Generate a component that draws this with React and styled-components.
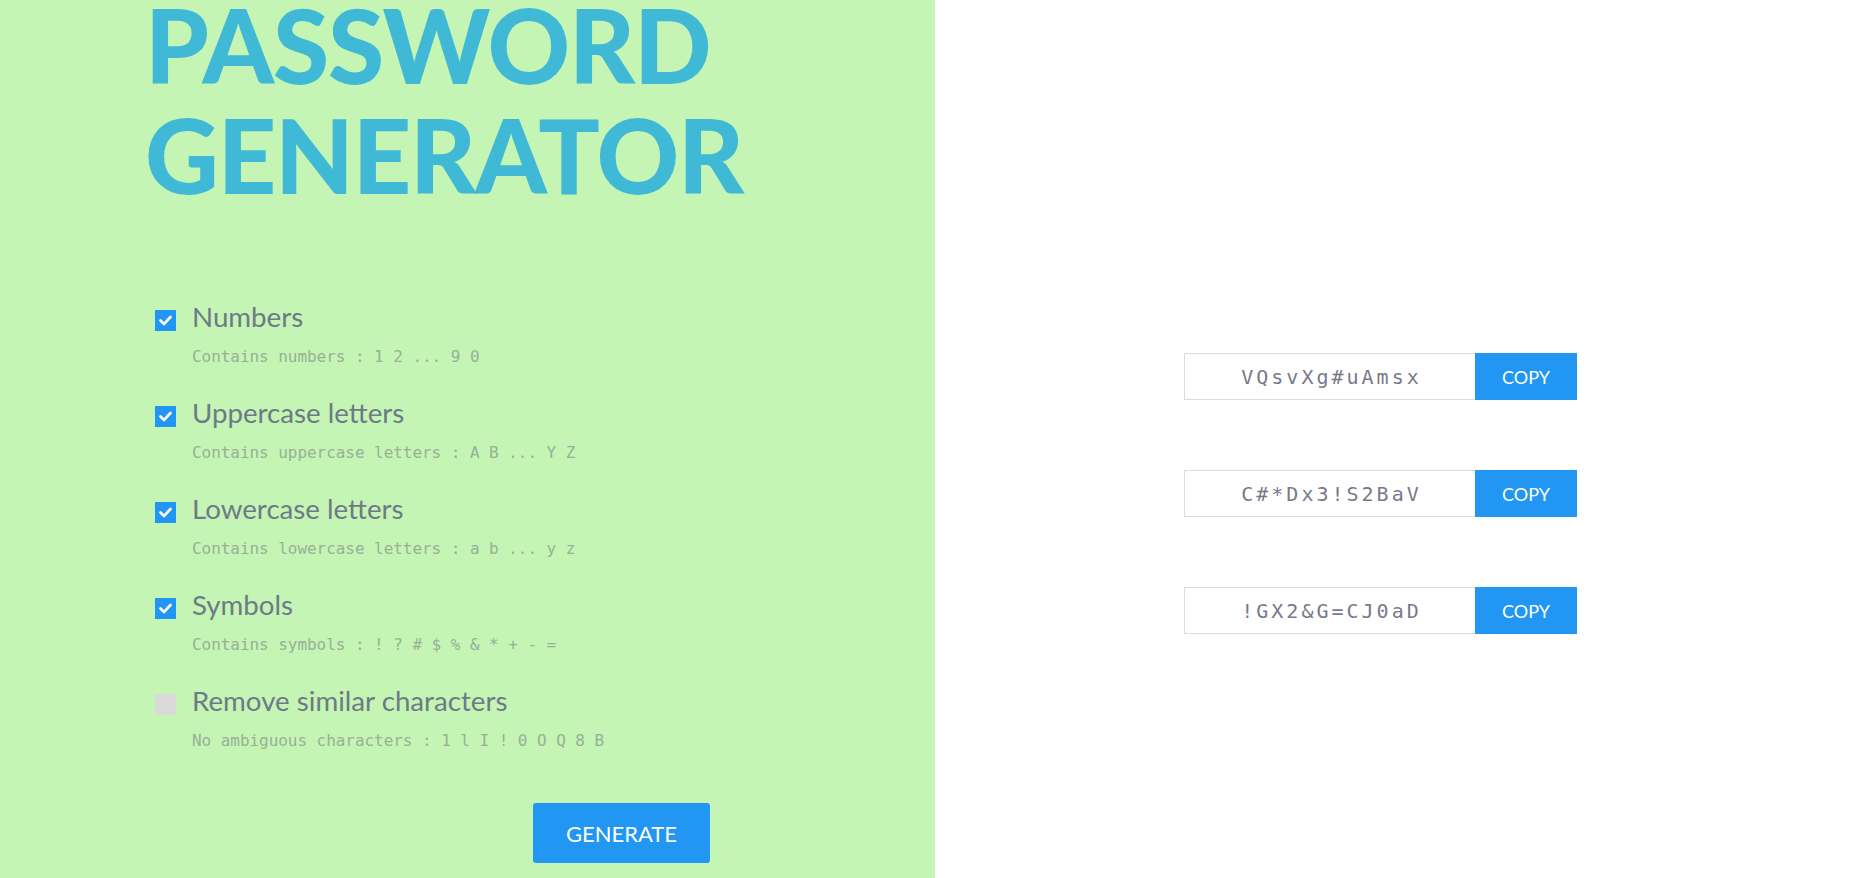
import React from "react";
import styled, { createGlobalStyle } from "styled-components";

const GlobalStyle = createGlobalStyle`
  html, body {
    margin: 0;
    padding: 0;
    height: 100%;
    overflow: hidden;
    background: #fff;
  }
  #root {
    height: 100%;
  }
`;

const Page = styled.div`
  display: grid;
  grid-template-columns: 935px 1fr;
  height: 878px;
  font-family: Lato, "Noto Sans", sans-serif;
`;

const LeftPanel = styled.div`
  background: #c4f5b4;
  padding-left: 145px;
  overflow: hidden;
`;

const Title = styled.h1`
  margin: -10px 0 0 0;
  font-size: 102px;
  line-height: 110px;
  font-weight: 900;
  color: #3fb9d6;
  letter-spacing: -1.2px;
`;

const Options = styled.div`
  display: flex;
  flex-direction: column;
  gap: 27px;
  margin: 90px 0 0 10px;
`;

const Option = styled.div`
  display: flex;
  flex-direction: column;
`;

const OptionHead = styled.label`
  display: flex;
  align-items: center;
  gap: 16px;
  height: 34px;
`;

const Check = styled.span`
  display: flex;
  align-items: center;
  justify-content: center;
  width: 21px;
  height: 21px;
  margin-top: 6px;
  background: ${(p) => (p.checked ? "#2196f3" : "#dadada")};
  flex-shrink: 0;
`;

const Label = styled.span`
  font-size: 27.7px;
  line-height: 34px;
  color: #6e7a87;
`;

const Description = styled.p`
  margin: 11px 0 0 37px;
  font-family: "DejaVu Sans Mono", "Liberation Mono", monospace;
  font-size: 16px;
  line-height: 24px;
  color: #98b097;
  letter-spacing: -0.05px;
`;

const GenerateButton = styled.button`
  display: block;
  margin: 50px 0 0 388px;
  width: 177px;
  height: 60px;
  border: none;
  border-radius: 3px;
  background: #2196f3;
  color: #fff;
  font-family: Lato, "Noto Sans", sans-serif;
  font-size: 22px;
  cursor: pointer;
`;

const RightPanel = styled.div`
  display: flex;
  flex-direction: column;
  gap: 70px;
  padding: 353px 0 0 249px;
`;

const ResultRow = styled.div`
  display: flex;
  height: 47px;
`;

const ResultField = styled.div`
  width: 291px;
  box-sizing: border-box;
  border: 1px solid #dcdcdc;
  border-right: none;
  display: flex;
  align-items: center;
  justify-content: center;
  font-family: "DejaVu Sans Mono", "Liberation Mono", monospace;
  font-size: 20px;
  letter-spacing: 3px;
  color: #777a8a;
  padding-left: 3px;
`;

const CopyButton = styled.button`
  width: 102px;
  border: none;
  background: #2196f3;
  color: #fff;
  font-family: Lato, "Noto Sans", sans-serif;
  font-size: 18px;
  cursor: pointer;
`;

const CheckMark = () => (
  <svg width="13" height="11" viewBox="0 0 13 11">
    <polyline
      points="1.5,5.5 5,9 11.5,2"
      fill="none"
      stroke="#fff"
      strokeWidth="2.6"
      strokeLinecap="round"
      strokeLinejoin="round"
    />
  </svg>
);

const options = [
  { label: "Numbers", desc: "Contains numbers : 1 2 ... 9 0", checked: true },
  { label: "Uppercase letters", desc: "Contains uppercase letters : A B ... Y Z", checked: true },
  { label: "Lowercase letters", desc: "Contains lowercase letters : a b ... y z", checked: true },
  { label: "Symbols", desc: "Contains symbols : ! ? # $ % & * + - =", checked: true },
  { label: "Remove similar characters", desc: "No ambiguous characters : 1 l I ! 0 O Q 8 B", checked: false },
];

const passwords = ["VQsvXg#uAmsx", "C#*Dx3!S2BaV", "!GX2&G=CJ0aD"];

const App = () => {
  return (
    <>
      <GlobalStyle />
      <Page>
        <LeftPanel>
          <Title>
            PASSWORD
            <br />
            GENERATOR
          </Title>
          <Options>
            {options.map((o) => (
              <Option key={o.label}>
                <OptionHead>
                  <Check checked={o.checked}>{o.checked && <CheckMark />}</Check>
                  <Label>{o.label}</Label>
                </OptionHead>
                <Description>{o.desc}</Description>
              </Option>
            ))}
          </Options>
          <GenerateButton>GENERATE</GenerateButton>
        </LeftPanel>
        <RightPanel>
          {passwords.map((p) => (
            <ResultRow key={p}>
              <ResultField>{p}</ResultField>
              <CopyButton>COPY</CopyButton>
            </ResultRow>
          ))}
        </RightPanel>
      </Page>
    </>
  );
};

export default App;
